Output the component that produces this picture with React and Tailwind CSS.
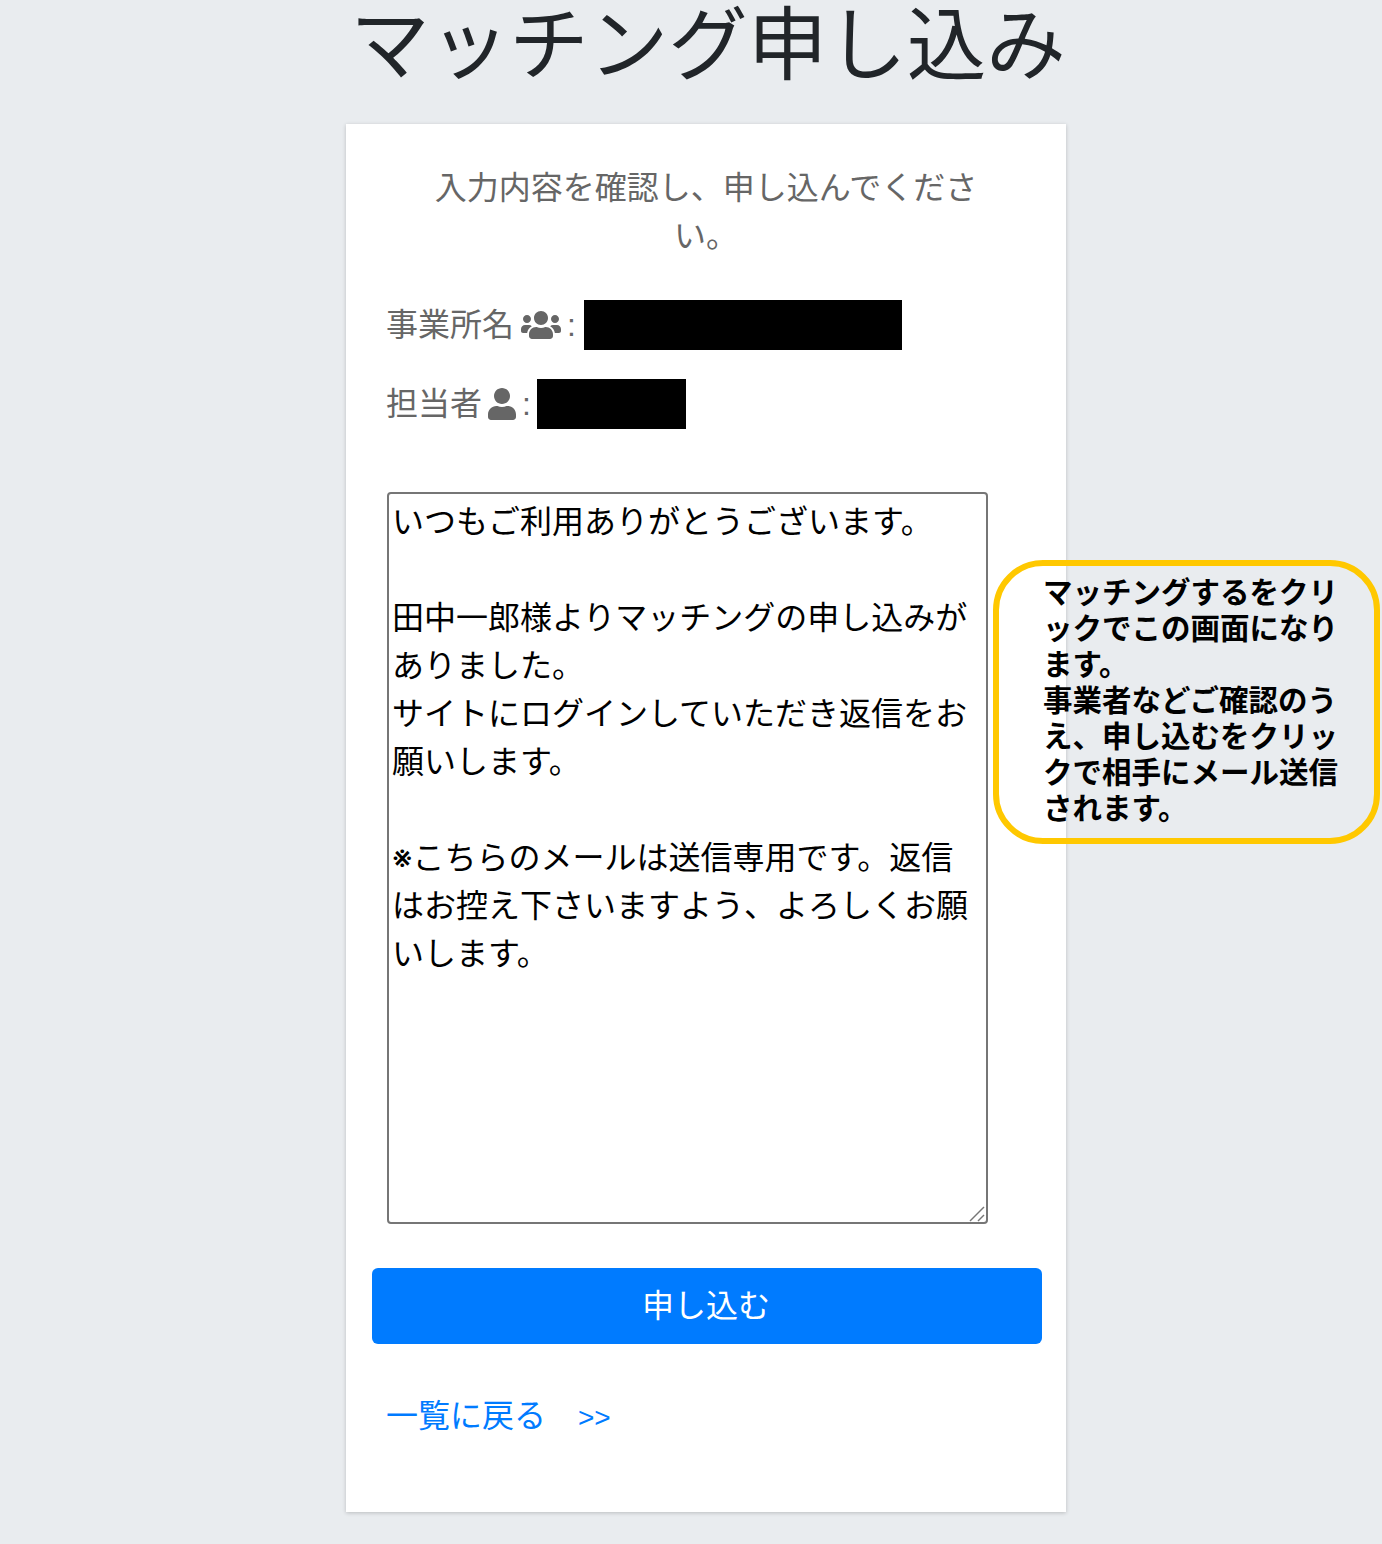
import React from 'react';
import { FaUsers, FaUser } from 'react-icons/fa';

const jp = "font-['Liberation_Sans','Noto_Sans_CJK_JP',sans-serif]";

const message = `いつもご利用ありがとうございます。

田中一郎様よりマッチングの申し込みがありました。
サイトにログインしていただき返信をお願いします。

※こちらのメールは送信専用です。返信はお控え下さいますよう、よろしくお願いします。`;

const App = () => {
    return (
        <div className={`relative min-h-[1544px] bg-[#e9ecef] text-[#212529] ${jp}`}>
            <h1 className="ml-[346px] w-[724px] h-[124px] text-center text-[79.5px] leading-[92px] font-normal whitespace-nowrap">
                マッチング申し込み
            </h1>

            {/* Card */}
            <div className="ml-[346px] w-[720px] h-[1388px] bg-white shadow-[0_1px_4px_rgba(0,0,0,0.2)] pt-[40px]">
                <p className="mx-auto w-[560px] text-center text-[32px] leading-[48px] text-[#666666]">
                    入力内容を確認し、申し込んでください。
                </p>

                <div className="flex items-center h-[50px] mt-[40px] ml-[40px] text-[32px] leading-[48px] text-[#666666]">
                    <span>事業所名</span>
                    <FaUsers className="ml-[7px] w-[40px] h-[32px]" />
                    <span className="ml-[6px]">:</span>
                    <div className="ml-[8px] w-[318px] h-[50px] bg-black"></div>
                </div>

                <div className="flex items-center h-[50px] mt-[29px] ml-[40px] text-[32px] leading-[48px] text-[#666666]">
                    <span>担当者</span>
                    <FaUser className="ml-[6px] w-[28px] h-[32px]" />
                    <span className="ml-[6px]">:</span>
                    <div className="ml-[6px] w-[149px] h-[50px] bg-black"></div>
                </div>

                <div className="relative mt-[63px] ml-[41px] w-[601px] h-[732px]">
                    <textarea
                        className="block w-full h-full px-[3px] py-[4px] border-2 border-[#767676] rounded-[4px] bg-white text-black font-['Inter','Noto_Sans_CJK_JP',sans-serif] text-[32px] leading-[48px] outline-none resize-none"
                        defaultValue={message}
                        readOnly
                    />
                    {/* resize grip */}
                    <svg className="absolute right-[3px] bottom-[2px] w-[16px] h-[16px]" viewBox="0 0 16 16" fill="none" stroke="#767676" strokeWidth="1.5">
                        <path d="M1 15 L15 1" />
                        <path d="M9 15 L15 9" />
                    </svg>
                </div>

                <button className="block mt-[44px] ml-[26px] w-[670px] h-[76px] pr-[2px] rounded-[6px] bg-[#007bff] text-white text-[32px] leading-[48px] text-center">
                    申し込む
                </button>

                <a href="#" className="inline-block mt-[48px] ml-[40px] text-[#007bff] text-[32px] leading-[48px]">
                    一覧に戻る　<span className="text-[28px]">&gt;&gt;</span>
                </a>
            </div>

            {/* Annotation */}
            <div className="absolute left-[993px] top-[560px] w-[387px] h-[284px] rounded-[50px] border-[6px] border-[#ffc800] pl-[44px] pr-[32px] pt-[9px] text-black text-[29.5px] leading-[36px] font-semibold">
                マッチングするをクリックでこの画面になります。
                <br />
                事業者などご確認のうえ、申し込むをクリックで相手にメール送信されます。
            </div>
        </div>
    );
};

export default App;
